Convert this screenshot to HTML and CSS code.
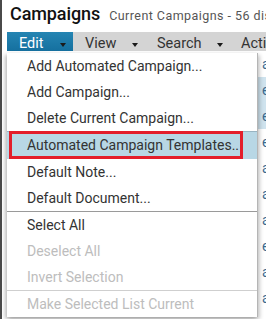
FILE: index.html
```html
<!DOCTYPE html>
<html>
<head>
<meta charset="utf-8">
<link rel="stylesheet" href="styles.css">
</head>
<body>
<div class="frame">
  <div class="header">
    <h1 class="title">Campaigns</h1>
    <span class="subtitle">Current Campaigns - 56 displayed</span>
  </div>
  <div class="toolbar">
    <div class="tb-item edit"><span>Edit</span><i class="caret"></i></div>
    <div class="tb-item view"><span>View</span><i class="caret"></i></div>
    <div class="tb-item search"><span>Search</span><i class="caret"></i></div>
    <div class="tb-item actions"><span>Actions</span><i class="caret"></i></div>
  </div>
  <div class="list">
    <div class="row">a</div>
    <div class="row alt">e</div>
    <div class="row alt">e</div>
    <div class="row">e</div>
    <div class="row">a</div>
    <div class="row">a</div>
    <div class="row">a</div>
    <div class="row">e</div>
    <div class="row">a</div>
    <div class="row">a</div>
  </div>

  <div class="menu">
    <div class="mi">Add Automated Campaign...</div>
    <div class="mi">Add Campaign...</div>
    <div class="mi">Delete Current Campaign...</div>
    <div class="mi hl">Automated Campaign Templates..</div>
    <div class="mi">Default Note...</div>
    <div class="mi">Default Document...</div>
    <div class="sep"></div>
    <div class="mi">Select All</div>
    <div class="mi dis">Deselect All</div>
    <div class="mi dis">Invert Selection</div>
    <div class="sep light"></div>
    <div class="mi dis">Make Selected List Current</div>
  </div>
  <div class="annot"></div>
</div>
</body>
</html>
```
FILE: styles.css
```css
html, body {
  margin: 0;
  padding: 0;
  background: #fff;
}
body {
  width: 266px;
  height: 319px;
  overflow: hidden;
  font-family: Roboto, "Liberation Sans", sans-serif;
}
.frame {
  position: relative;
  height: 319px;
  border-left: 2px solid #4a4a4a;
  box-sizing: border-box;
}
.header {
  display: flex;
  align-items: baseline;
  white-space: nowrap;
  padding: 3px 0 0 8px;
  height: 32px;
  box-sizing: border-box;
}
.title {
  margin: 0;
  font-size: 18px;
  font-weight: 500;
  color: #111;
  letter-spacing: -0.1px;
}
.subtitle {
  margin-left: 9px;
  font-size: 12.5px;
  color: #555;
  letter-spacing: 0.45px;
}
.toolbar {
  display: flex;
  margin-left: 5px;
  height: 19px;
  background: #d4d4d4;
  white-space: nowrap;
  overflow: hidden;
}
.tb-item {
  display: flex;
  flex-shrink: 0;
  align-items: center;
  font-size: 14.5px;
  color: #333;
  padding-left: 12px;
  padding-top: 3px;
  box-sizing: border-box;
}
.tb-item.edit {
  width: 66px;
  background: linear-gradient(#2585b3, #15709f);
  color: #fff;
}
.tb-item.view { width: 72px; }
.tb-item.search { width: 85px; }
.tb-item.actions { padding-left: 11px; }
.caret {
  display: inline-block;
  width: 0;
  height: 0;
  border-left: 3.5px solid transparent;
  border-right: 3.5px solid transparent;
  border-top: 4px solid #1a1a1a;
  margin-left: auto;
  margin-right: 7px;
  margin-top: 4px;
}
.tb-item.actions .caret {
  margin-left: 8px;
}
.list {
  margin-left: 5px;
}
.row {
  height: 26px;
  line-height: 26px;
  font-size: 14px;
  color: #3a6a90;
  padding-left: 255px;
  white-space: nowrap;
  background: #fff;
}
.row.alt {
  background: #cfe3ee;
}
.menu {
  position: absolute;
  left: 5px;
  top: 53px;
  width: 251px;
  height: 264px;
  background: #fff;
  border-right: 1px solid #b5b5b5;
  box-shadow: -2px 2px 4px rgba(0,0,0,0.25), 2px 2px 4px rgba(0,0,0,0.2);
  box-sizing: border-box;
}
.mi {
  height: 26px;
  line-height: 26px;
  padding-left: 20px;
  font-size: 14px;
  color: #333;
  white-space: nowrap;
}
.mi.hl {
  height: 28px;
  line-height: 27px;
  background: #b8d7e5;
  border-top: 1px solid #98b4c2;
  box-sizing: border-box;
}
.mi.dis {
  color: #bdbdbd;
}
.sep {
  height: 1px;
  background: #9a9a9a;
}
.sep.light {
  background: #cfcfcf;
}
.annot {
  position: absolute;
  left: 7px;
  top: 131px;
  width: 234px;
  height: 28px;
  border: 3px solid #e31e2b;
  box-sizing: border-box;
}
```
